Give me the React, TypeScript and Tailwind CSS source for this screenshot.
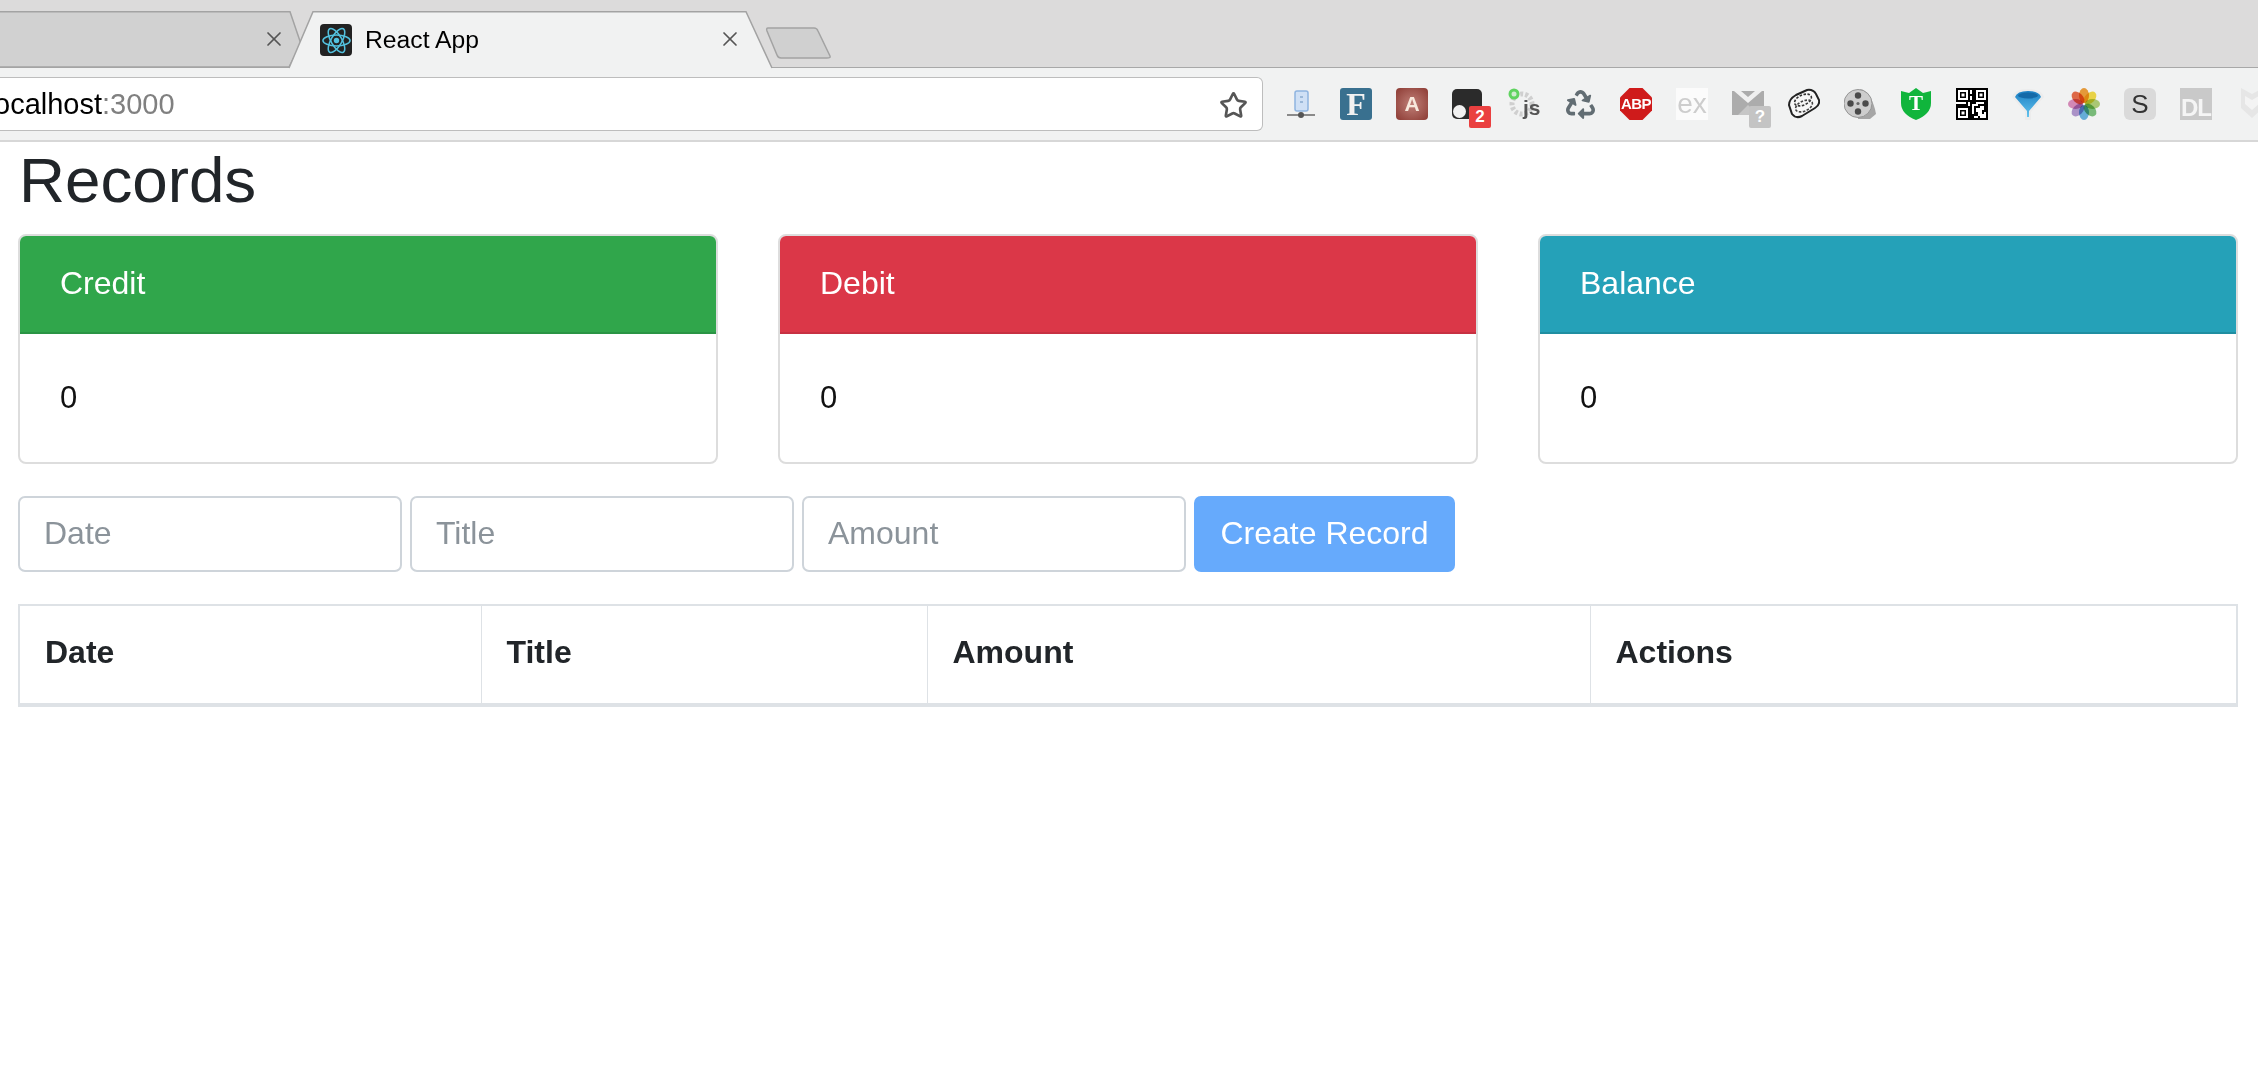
import type { ReactNode } from "react";
import { Star, X } from "lucide-react";
import { FaRecycle } from "react-icons/fa";

function ReactLogo() {
  return (
    <div className="w-[32px] h-[32px] rounded-[4px] bg-[#222222] flex items-center justify-center">
      <svg viewBox="-12 -12 24 24" className="w-[31px] h-[31px]" fill="none" stroke="#53c1de" strokeWidth="1.2">
        <circle r="2.1" fill="#53c1de" stroke="none" />
        <ellipse rx="10.5" ry="4.2" />
        <ellipse rx="10.5" ry="4.2" transform="rotate(60)" />
        <ellipse rx="10.5" ry="4.2" transform="rotate(120)" />
      </svg>
    </div>
  );
}

function Badge({ children, color }: { children: ReactNode; color: string }) {
  return (
    <div className={`absolute left-[17px] top-[18px] w-[22px] h-[22px] rounded-[2px] flex items-center justify-center text-white text-[17px] font-bold ${color}`}>
      {children}
    </div>
  );
}

function NetworkIcon() {
  return (
    <svg width="32" height="32" viewBox="0 0 32 32">
      <rect x="11" y="3" width="13" height="20" rx="2" fill="#cfe0f5" stroke="#8fb4e0" strokeWidth="1.5" />
      <rect x="16" y="8" width="3" height="2" fill="#9bb8d8" />
      <rect x="16" y="13" width="3" height="2" fill="#9bb8d8" />
      <path d="M3 27H31" stroke="#8a8a8a" strokeWidth="2" />
      <circle cx="17" cy="27" r="3" fill="#555555" />
    </svg>
  );
}

function JsIcon() {
  return (
    <div className="relative w-[32px] h-[32px]">
      <svg width="32" height="32" viewBox="0 0 32 32" fill="none">
        <circle cx="14" cy="16" r="10" stroke="#cfcfcf" strokeWidth="5" strokeDasharray="3 2" />
        <circle cx="6" cy="6" r="5.5" fill="#5fd35f" />
        <circle cx="6" cy="6" r="2.5" fill="#cfeccf" />
      </svg>
      <span className="absolute left-[15px] top-[10px] text-[21px] leading-[20px] font-bold text-[#555555]">js</span>
    </div>
  );
}

function GmailIcon() {
  return (
    <div className="relative w-[32px] h-[32px]">
      <svg width="32" height="32" viewBox="0 0 32 32">
        <rect y="3" width="32" height="24" fill="#acacac" />
        <path d="M2 3H9L16 9L23 3H30L16 15Z" fill="#f0f0f0" />
        <path d="M6 27L16 17L26 27Z" fill="#c6c6c6" />
      </svg>
      <Badge color="bg-[#c4c4c4]">?</Badge>
    </div>
  );
}

function DiskIcon() {
  return (
    <svg width="32" height="32" viewBox="0 0 32 32">
      <path d="M1 17Q1 11 8 7L19 2Q25 1 28 6L31 12Q32 17 27 20L14 28Q8 31 4 26Z" fill="#f7f7f7" stroke="#222222" strokeWidth="2" />
      <ellipse cx="15" cy="12" rx="9" ry="5" fill="none" stroke="#333333" strokeWidth="1.6" strokeDasharray="2.5 1.5" transform="rotate(-25 15 12)" />
      <ellipse cx="16" cy="18" rx="9" ry="5" fill="none" stroke="#444444" strokeWidth="1.6" strokeDasharray="2.5 1.5" transform="rotate(-25 16 18)" />
    </svg>
  );
}

function ReelIcon() {
  return (
    <svg width="32" height="32" viewBox="0 0 32 32">
      <path d="M16 1C24 2 30 14 32 26L26 31H14Z" fill="#a6a6a6" />
      <circle cx="14" cy="15.5" r="14" fill="#cdcdcd" stroke="#969696" />
      <circle cx="14" cy="7.5" r="3.2" fill="#4a4a4a" />
      <circle cx="14" cy="23.5" r="3.2" fill="#4a4a4a" />
      <circle cx="6.5" cy="15.5" r="3.2" fill="#4a4a4a" />
      <circle cx="21.5" cy="15.5" r="3.2" fill="#4a4a4a" />
      <circle cx="14" cy="15.5" r="1.6" fill="#666666" />
    </svg>
  );
}

function ShieldIcon() {
  return (
    <div className="relative w-[32px] h-[32px]">
      <svg width="32" height="32" viewBox="0 0 32 32">
        <path d="M1 3L9 5L16 0L23 5L31 3V15Q31 26 16 32Q1 26 1 15Z" fill="#10b53c" />
      </svg>
      <span className="absolute inset-0 flex items-center justify-center text-white text-[21px] font-bold font-['Liberation_Serif',serif]">T</span>
    </div>
  );
}

function QrIcon() {
  return (
    <svg width="32" height="32" viewBox="0 0 32 32">
      <rect width="32" height="32" fill="#000000" />
      <path fill="#ffffff" d="M2 2H12V12H2ZM20 2H30V12H20ZM2 20H12V30H2ZM14 2H16V6H14ZM14 8H16V12H14ZM0 14H10V16H0ZM12 14H14V18H12ZM16 16H20V14H28V16H22V18H18V26H16ZM24 18H28V22H26V26H28V24H30V30H24V28H22V30H18V28H22V24H20V20H24Z" />
      <path fill="#000000" d="M4 4H10V10H4ZM22 4H28V10H22ZM4 22H10V28H4Z" />
      <path fill="#ffffff" d="M5.5 5.5H8.5V8.5H5.5ZM23.5 5.5H26.5V8.5H23.5ZM5.5 23.5H8.5V26.5H5.5Z" />
    </svg>
  );
}

function FunnelIcon() {
  return (
    <svg width="32" height="32" viewBox="0 0 32 32">
      <defs>
        <linearGradient id="funnel" x1="0" y1="0" x2="0" y2="1">
          <stop offset="0" stopColor="#1b80c4" />
          <stop offset="1" stopColor="#63c3ee" />
        </linearGradient>
      </defs>
      <path d="M0 9Q2 1 16 1Q30 1 32 9L19 24V32H13V24Z" fill="#ececec" />
      <path d="M3 9Q5 3 16 3Q27 3 29 9L17 23V29H15V23Z" fill="url(#funnel)" />
      <ellipse cx="16" cy="7.5" rx="10" ry="3" fill="#156aa8" />
    </svg>
  );
}

const petals = ["#f2a13c", "#f6de4b", "#b4d27a", "#7fc47f", "#6bb7e3", "#b49ad2", "#df8fc0", "#ea6f4c"];

function PhotosIcon() {
  return (
    <svg width="32" height="32" viewBox="-16 -16 32 32">
      {petals.map((color, i) => (
        <ellipse key={color} cx="0" cy="-8.5" rx="5" ry="7.5" fill={color} className="mix-blend-multiply" transform={`rotate(${i * 45})`} />
      ))}
    </svg>
  );
}

function ToolbarIcons() {
  return (
    <div className="ml-[21px] flex gap-[24px] shrink-0">
      <NetworkIcon />
      <div className="w-[32px] h-[32px] rounded-[3px] bg-[#39708f] flex items-center justify-center text-[#f1f1f1] text-[32px] font-bold font-['Liberation_Serif',serif]">F</div>
      <div className="w-[32px] h-[32px] rounded-[4px] bg-[radial-gradient(circle,#c08078,#8c3a33)] flex items-center justify-center text-[#f8e8dc] text-[21px] font-bold">A</div>
      <div className="relative w-[32px] h-[32px]">
        <div className="w-[30px] h-[30px] mt-[1px] rounded-[5px] bg-[#2b2b2b]" />
        <div className="absolute left-[1px] top-[17px] w-[13px] h-[13px] rounded-full bg-[#f1f1f1]" />
        <Badge color="bg-[#ea4040]">2</Badge>
      </div>
      <JsIcon />
      <div className="w-[32px] h-[32px] flex items-center justify-center">
        <FaRecycle className="text-[#626d73]" size={29} />
      </div>
      <div className="relative w-[32px] h-[32px]">
        <svg width="32" height="32" viewBox="0 0 32 32" className="absolute inset-0">
          <path d="M9.5 0H22.5L32 9.5V22.5L22.5 32H9.5L0 22.5V9.5Z" fill="#cf1b1b" />
        </svg>
        <span className="absolute inset-0 flex items-center justify-center text-white text-[15px] font-bold tracking-[-0.5px]">ABP</span>
      </div>
      <div className="w-[32px] h-[32px] bg-[#fbfbfb] flex items-center justify-center text-[#cdcdcd] text-[28px] leading-none">ex</div>
      <GmailIcon />
      <DiskIcon />
      <ReelIcon />
      <ShieldIcon />
      <QrIcon />
      <FunnelIcon />
      <PhotosIcon />
      <div className="w-[32px] h-[32px] rounded-[6px] bg-[#dadada] flex items-center justify-center text-[#333333] text-[26px]">S</div>
      <div className="w-[32px] h-[32px] bg-[#c9c9c9] flex items-end justify-center text-[#f5f5f5] text-[24px] leading-[25px] font-bold tracking-[-1px]">DL</div>
      <svg width="32" height="32" viewBox="0 0 32 32" fill="#e6e6e6">
        <path d="M5 0L16 6L27 0V20L16 30L5 20Z" />
        <path d="M9 8L16 12L23 8V16L16 22L9 16Z" fill="#f4f4f4" />
      </svg>
    </div>
  );
}

function BrowserChrome() {
  return (
    <div className="font-['Liberation_Sans',sans-serif]">
      <div className="h-[68px] bg-[#dcdbdb] border-b border-[#a8a8a8] relative">
        <div className="absolute left-0 top-[11px] h-[57px] w-[301px]">
          <svg className="absolute inset-0" width="301" height="57" fill="#d1d1d1" stroke="#a3a3a3" strokeWidth="1.5">
            <path d="M-2 0.7H290L301 33L289 56H-2Z" />
          </svg>
          <X className="absolute left-[262px] top-[16px] text-[#555555]" size={24} strokeWidth={1.7} />
        </div>
        <div className="absolute left-[288px] top-[11px] h-[58px] w-[486px]">
          <svg className="absolute inset-0" width="486" height="58" fill="#f1f2f2" stroke="#a3a3a3" strokeWidth="1.5">
            <path d="M1 57L25 0.7H458L484 57" />
          </svg>
          <div className="absolute left-[32px] top-[13px] flex items-center gap-[13px]">
            <ReactLogo />
            <span className="text-[24.7px] text-black leading-[32px]">React App</span>
          </div>
          <X className="absolute left-[430px] top-[16px] text-[#555555]" size={24} strokeWidth={1.7} />
        </div>
        <svg className="absolute left-[765px] top-[26px]" width="68" height="34" fill="#d0d0d0" stroke="#a3a3a3" strokeWidth="1.5">
          <path d="M3 2H49Q52 2 53 5L65 30Q66 32 62 32H16Q13 32 12 29L2 5Q1 2 3 2Z" />
        </svg>
      </div>
      <div className="h-[74px] bg-[#f1f2f2] border-b-2 border-[#d7d7d7] flex items-center overflow-hidden">
        <div className="w-[1263px] h-[54px] shrink-0 bg-white border border-[#bdbdbd] border-l-0 rounded-r-[6px] flex items-center justify-between pr-[14px]">
          <span className="text-[29px] text-black -ml-[6px] pt-[2px]">
            ocalhost<span className="text-[#808080]">:3000</span>
          </span>
          <Star className="text-[#555555] mt-[2px]" size={29} strokeWidth={2.2} />
        </div>
        <ToolbarIcons />
      </div>
    </div>
  );
}

function SummaryCard({ title, color, border }: { title: string; color: string; border: string }) {
  return (
    <div className="w-[700px] h-[230px] border-2 border-[#dddddd] rounded-[8px] overflow-hidden">
      <div className={`h-[98px] flex items-center pl-[40px] pb-[3px] text-white text-[32px] border-b-2 ${color} ${border}`}>
        {title}
      </div>
      <div className="pl-[40px] pt-[46px] text-[31px] text-[#111111] leading-[36px]">0</div>
    </div>
  );
}

const inputClass =
  "w-[384px] h-[76px] border-2 border-[#ced4da] rounded-[7px] px-[24px] pb-[2px] text-[32px] placeholder:text-[#8b939a]";

export default function App() {
  return (
    <div className="min-h-screen bg-white font-['Liberation_Sans',sans-serif]">
      <BrowserChrome />
      <div className="pl-[18px] pr-[20px]">
        <h1 className="text-[63.7px] leading-[76px] text-[#212529] ml-[1px]">Records</h1>
        <div className="mt-[16px] flex justify-between">
          <SummaryCard title="Credit" color="bg-[#30a64b]" border="border-[#2a9444]" />
          <SummaryCard title="Debit" color="bg-[#db3748]" border="border-[#c73142]" />
          <SummaryCard title="Balance" color="bg-[#25a1b8]" border="border-[#1f8ea1]" />
        </div>
        <div className="mt-[32px] flex gap-[8px]">
          <input placeholder="Date" className={inputClass} />
          <input placeholder="Title" className={inputClass} />
          <input placeholder="Amount" className={inputClass} />
          <button className="w-[261px] h-[76px] pb-[2px] bg-[#66aafc] rounded-[7px] text-white text-[32px]">Create Record</button>
        </div>
        <table className="mt-[32px] w-full table-fixed border-collapse">
          <thead>
            <tr className="h-[100px] text-left text-[32px] text-[#212529]">
              <th className="w-[462px] border-l-2 border-r border-t-2 border-b-4 border-[#dee2e6] pl-[25px] pb-[6px] font-bold">Date</th>
              <th className="w-[446px] border-x border-t-2 border-b-4 border-[#dee2e6] pl-[25px] pb-[6px] font-bold">Title</th>
              <th className="w-[663px] border-x border-t-2 border-b-4 border-[#dee2e6] pl-[25px] pb-[6px] font-bold">Amount</th>
              <th className="border-l border-r-2 border-t-2 border-b-4 border-[#dee2e6] pl-[25px] pb-[6px] font-bold">Actions</th>
            </tr>
          </thead>
        </table>
      </div>
    </div>
  );
}
